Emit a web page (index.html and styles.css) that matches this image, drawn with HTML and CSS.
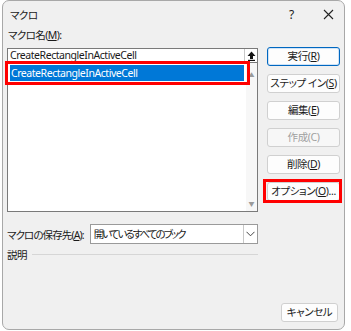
FILE: index.html
```html
<!DOCTYPE html>
<html lang="ja">
<head>
    <meta charset="UTF-8">
    <title>マクロ</title>
    <link rel="stylesheet" href="styles.css">
</head>
<body>

<div class="window">
    <div class="titlebar">
        <span class="title">マクロ</span>
        <span class="help">?</span>
        <span class="close">
            <svg width="11" height="11" viewBox="0 0 11 11"><path d="M1 1L10 10M10 1L1 10" stroke="#222" stroke-width="1.1"/></svg>
        </span>
    </div>

    <div class="content">
        <div class="left">
            <div class="label">マクロ名(<u>M</u>):</div>
            <div class="name-box">
                <span class="name-text">CreateRectangleInActiveCell</span>
                <span class="up-btn">
                    <svg width="9" height="10" viewBox="0 0 9 10"><path d="M4.5 0.5L8.5 5H6V8H3V5H0.5Z" fill="#111"/><rect x="1" y="8.8" width="7" height="1.2" fill="#111"/></svg>
                </span>
            </div>
            <div class="list">
                <div class="items">
                    <div class="item selected">CreateRectangleInActiveCell</div>
                </div>
                <div class="scroll">
                    <span class="arrow">▲</span>
                    <span class="arrow">▼</span>
                </div>
                <div class="mark mark-list"></div>
            </div>

            <div class="store-row">
                <span class="store-label">マクロの保存先(<u>A</u>):</span>
                <div class="select">
                    <span class="select-text">開いているすべてのブック</span>
                    <span class="select-arrow">
                        <svg width="9" height="6" viewBox="0 0 9 6"><path d="M0.5 0.8L4.5 4.8L8.5 0.8" fill="none" stroke="#444" stroke-width="1"/></svg>
                    </span>
                </div>
            </div>
            <div class="desc">
                <span>説明</span>
                <span class="desc-line"></span>
            </div>
        </div>

        <div class="buttons">
            <div class="btn default">実行(<u>R</u>)</div>
            <div class="btn">ステップ イン(<u>S</u>)</div>
            <div class="btn">編集(<u>E</u>)</div>
            <div class="btn disabled">作成(C)</div>
            <div class="btn">削除(<u>D</u>)</div>
            <div class="btn-wrap">
                <div class="btn">オプション(<u>O</u>)...</div>
                <div class="mark mark-btn"></div>
            </div>
        </div>
    </div>

    <div class="footer">
        <div class="btn cancel">キャンセル</div>
    </div>
</div>

</body>
</html>
```

FILE: styles.css
```css
body {
    margin: 0;
    padding: 0;
    background: #fff;
    font-family: "Noto Sans", "Noto Sans CJK JP", sans-serif;
    font-size: 10.5px;
    font-feature-settings: "palt";
    color: #1a1a1a;
}
u {
    text-decoration-thickness: 1px;
    text-underline-offset: 1px;
}
.window {
    box-sizing: border-box;
    width: 343px;
    height: 330px;
    margin-left: 2px;
    border: 1px solid #a8a8a8;
    border-radius: 7px;
    background: #f0f0f0;
    display: flex;
    flex-direction: column;
}
.titlebar {
    height: 26px;
    display: flex;
    align-items: center;
    padding-left: 7px;
}
.title {
    flex: 1;
    letter-spacing: -0.5px;
}
.help {
    width: 34px;
    font-size: 12px;
}
.close {
    width: 21px;
    display: flex;
}
.content {
    display: flex;
    padding: 0 4px;
    gap: 9px;
}
.left {
    width: 251px;
}
.label {
    height: 16px;
    line-height: 16px;
    margin-bottom: 5px;
    padding-left: 1px;
    letter-spacing: -0.6px;
}
.name-box {
    box-sizing: border-box;
    height: 14px;
    display: flex;
    border: 1px solid #7a7a7a;
    border-bottom: none;
    background: #fff;
}
.name-text {
    flex: 1;
    line-height: 13px;
    padding-left: 2px;
    letter-spacing: -0.45px;
}
.up-btn {
    width: 12px;
    border-left: 1px solid #c8c8c8;
    display: flex;
    align-items: center;
    justify-content: center;
}
.list {
    position: relative;
    box-sizing: border-box;
    height: 150px;
    display: flex;
    border: 1px solid #7a7a7a;
    background: #fff;
}
.items {
    flex: 1;
    padding: 2px 2px 0 2px;
}
.item {
    height: 16px;
    line-height: 16px;
    padding-left: 1px;
    letter-spacing: -0.45px;
}
.item.selected {
    background: #0078d7;
    color: #fff;
}
.scroll {
    width: 11px;
    background: #f7f7f7;
    display: flex;
    flex-direction: column;
    justify-content: space-between;
    align-items: center;
    padding: 7px 0 3px;
}
.arrow {
    font-size: 6px;
    color: #9a9a9a;
}
.mark {
    position: absolute;
    border: 3px solid #ff0000;
    box-sizing: border-box;
}
.mark-list {
    left: -3px;
    top: -2px;
    width: 245px;
    height: 24px;
}
.store-row {
    display: flex;
    align-items: center;
    margin-top: 12px;
    gap: 6px;
}
.store-label {
    width: 77px;
    white-space: nowrap;
    letter-spacing: -0.9px;
}
.select {
    box-sizing: border-box;
    width: 170px;
    height: 20px;
    display: flex;
    border: 1px solid #9a9a9a;
    background: #fff;
}
.select-text {
    flex: 1;
    line-height: 18px;
    padding-left: 3px;
    letter-spacing: -2px;
}
.select-arrow {
    width: 13px;
    border-left: 1px solid #c8c8c8;
    display: flex;
    align-items: center;
    justify-content: center;
}
.desc {
    display: flex;
    align-items: center;
    gap: 5px;
    margin-top: 2px;
    height: 16px;
    letter-spacing: -0.5px;
}
.desc-line {
    flex: 1;
    border-top: 1px solid #d6d6d6;
}
.buttons {
    width: 73px;
    display: flex;
    flex-direction: column;
    gap: 8px;
    padding-top: 20px;
}
.btn {
    box-sizing: border-box;
    height: 19px;
    line-height: 17px;
    border: 1px solid #d0d0d0;
    border-radius: 3px;
    background: #fdfdfd;
    text-align: center;
    white-space: nowrap;
    letter-spacing: -0.4px;
}
.btn.default {
    border: 1px solid #0067c0;
    box-shadow: inset 0 0 0 1px #cfe3f7;
}
.btn.disabled {
    color: #a0a0a0;
    background: #f7f7f7;
}
.btn-wrap {
    position: relative;
}
.mark-btn {
    left: -4px;
    top: -3px;
    width: 79px;
    height: 24px;
}
.footer {
    flex: 1;
    display: flex;
    justify-content: flex-end;
    align-items: flex-end;
    padding: 0 6px 7px 0;
}
.btn.cancel {
    width: 57px;
}
```
